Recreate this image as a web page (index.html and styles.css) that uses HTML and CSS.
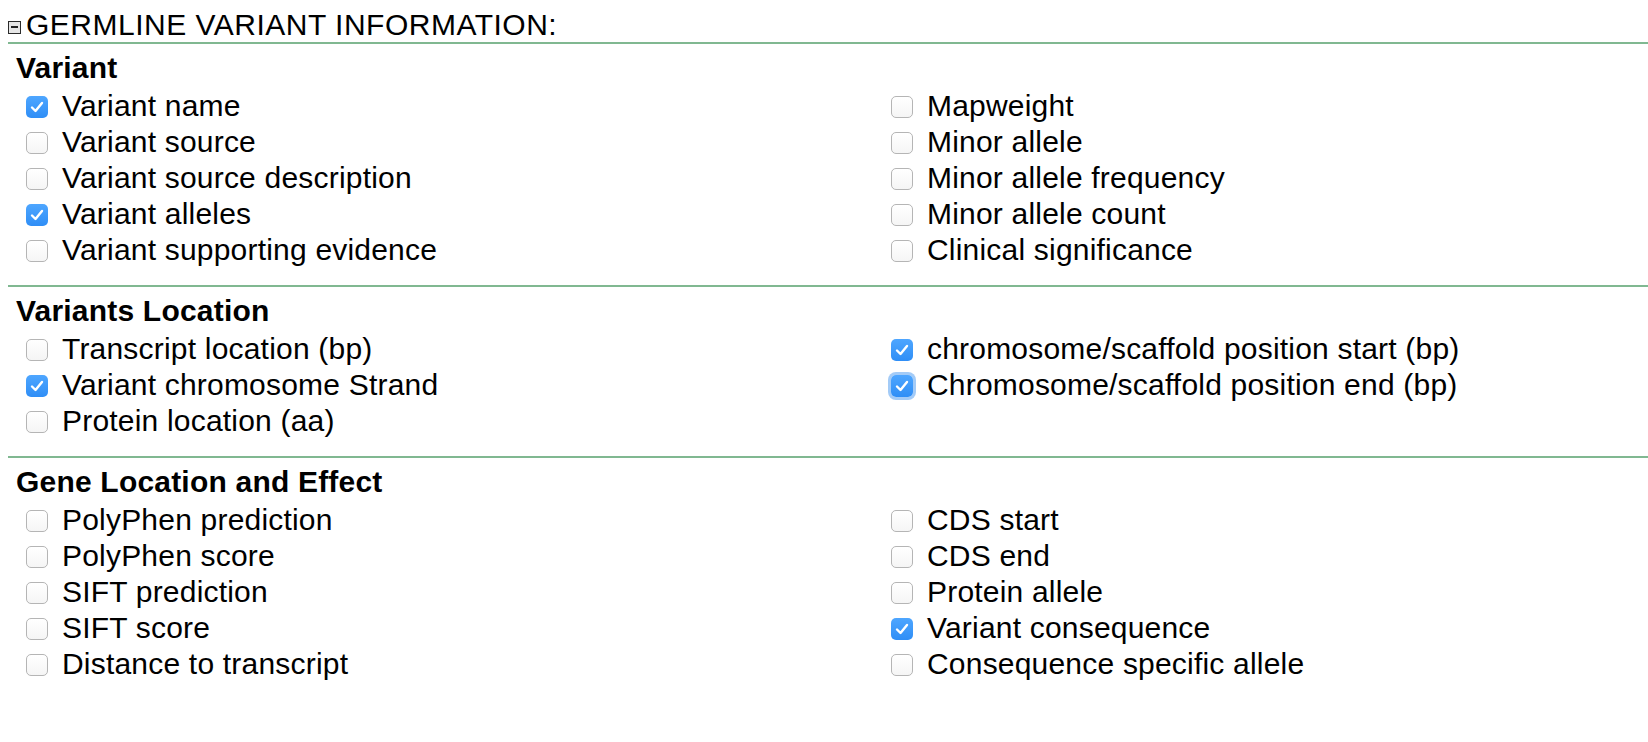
FILE: index.html
```html
<!DOCTYPE html>
<html>
<head>
<meta charset="utf-8">
<link rel="stylesheet" href="styles.css">
</head>
<body>
<div class="panel">
  <div class="panel-title">
    <span class="toggle"><span class="toggle-bar"></span></span>
    <span class="panel-title-text">GERMLINE VARIANT INFORMATION:</span>
  </div>

  <section class="group">
    <h2 class="group-title">Variant</h2>
    <div class="opts">
      <div class="col">
        <label class="opt"><span class="cb on"><svg viewBox="0 0 22 22"><path d="M6 11.5 L9.5 15 L16 7"/></svg></span>Variant name</label>
        <label class="opt"><span class="cb"></span>Variant source</label>
        <label class="opt"><span class="cb"></span>Variant source description</label>
        <label class="opt"><span class="cb on"><svg viewBox="0 0 22 22"><path d="M6 11.5 L9.5 15 L16 7"/></svg></span>Variant alleles</label>
        <label class="opt"><span class="cb"></span>Variant supporting evidence</label>
      </div>
      <div class="col">
        <label class="opt"><span class="cb"></span>Mapweight</label>
        <label class="opt"><span class="cb"></span>Minor allele</label>
        <label class="opt"><span class="cb"></span>Minor allele frequency</label>
        <label class="opt"><span class="cb"></span>Minor allele count</label>
        <label class="opt"><span class="cb"></span>Clinical significance</label>
      </div>
    </div>
  </section>

  <section class="group">
    <h2 class="group-title">Variants Location</h2>
    <div class="opts">
      <div class="col">
        <label class="opt"><span class="cb"></span>Transcript location (bp)</label>
        <label class="opt"><span class="cb on"><svg viewBox="0 0 22 22"><path d="M6 11.5 L9.5 15 L16 7"/></svg></span>Variant chromosome Strand</label>
        <label class="opt"><span class="cb"></span>Protein location (aa)</label>
      </div>
      <div class="col">
        <label class="opt"><span class="cb on"><svg viewBox="0 0 22 22"><path d="M6 11.5 L9.5 15 L16 7"/></svg></span>chromosome/scaffold position start (bp)</label>
        <label class="opt"><span class="cb on focus"><svg viewBox="0 0 22 22"><path d="M6 11.5 L9.5 15 L16 7"/></svg></span>Chromosome/scaffold position end (bp)</label>
      </div>
    </div>
  </section>

  <section class="group">
    <h2 class="group-title">Gene Location and Effect</h2>
    <div class="opts">
      <div class="col">
        <label class="opt"><span class="cb"></span>PolyPhen prediction</label>
        <label class="opt"><span class="cb"></span>PolyPhen score</label>
        <label class="opt"><span class="cb"></span>SIFT prediction</label>
        <label class="opt"><span class="cb"></span>SIFT score</label>
        <label class="opt"><span class="cb"></span>Distance to transcript</label>
      </div>
      <div class="col">
        <label class="opt"><span class="cb"></span>CDS start</label>
        <label class="opt"><span class="cb"></span>CDS end</label>
        <label class="opt"><span class="cb"></span>Protein allele</label>
        <label class="opt"><span class="cb on"><svg viewBox="0 0 22 22"><path d="M6 11.5 L9.5 15 L16 7"/></svg></span>Variant consequence</label>
        <label class="opt"><span class="cb"></span>Consequence specific allele</label>
      </div>
    </div>
  </section>
</div>
</body>
</html>
```

FILE: styles.css
```css
html, body {
  background: #fff;
}
body {
  margin: 8px 0 0 8px;
  font-family: "Liberation Sans", Arial, Helvetica, sans-serif;
  font-size: 30px;
  color: #000;
  overflow: hidden;
}
.panel-title {
  display: flex;
  align-items: center;
  height: 34px;
  line-height: 34px;
}
.toggle {
  box-sizing: border-box;
  width: 13px;
  height: 13px;
  margin: 4px 5px 0 0;
  border: 1.5px solid #2b2b2b;
  background: #e6e6e6;
  display: flex;
  align-items: center;
  justify-content: center;
}
.toggle-bar {
  width: 7px;
  height: 1.5px;
  background: #222;
}
.panel-title-text {
  letter-spacing: 0.5px;
}
.group {
  border-top: 2px solid #80b891;
  padding: 6px 0 17px 8px;
}
.group-title {
  margin: 0;
  font-size: 30px;
  font-weight: bold;
  line-height: 36px;
  letter-spacing: 0.2px;
}
.opts {
  margin-top: 2px;
  display: grid;
  grid-template-columns: 865px 1fr;
}
.col {
  display: flex;
  flex-direction: column;
}
.opt {
  display: flex;
  align-items: center;
  height: 36px;
  line-height: 36px;
  white-space: nowrap;
  letter-spacing: 0.2px;
}
.cb {
  box-sizing: border-box;
  width: 22px;
  height: 22px;
  margin: 2px 14px 0 10px;
  border: 1px solid #b5b5b5;
  border-radius: 5px;
  background: linear-gradient(#ffffff, #f5f5f5);
  flex: none;
  display: flex;
  align-items: center;
  justify-content: center;
}
.cb svg {
  width: 22px;
  height: 22px;
}
.cb svg path {
  fill: none;
  stroke: #fff;
  stroke-width: 2.4;
  stroke-linecap: round;
  stroke-linejoin: round;
}
.cb.on {
  border: none;
  background: linear-gradient(#4ea6ff, #2f8ef6);
}
.cb.focus {
  box-shadow: 0 0 0 3px #a3cbf7;
}
```
